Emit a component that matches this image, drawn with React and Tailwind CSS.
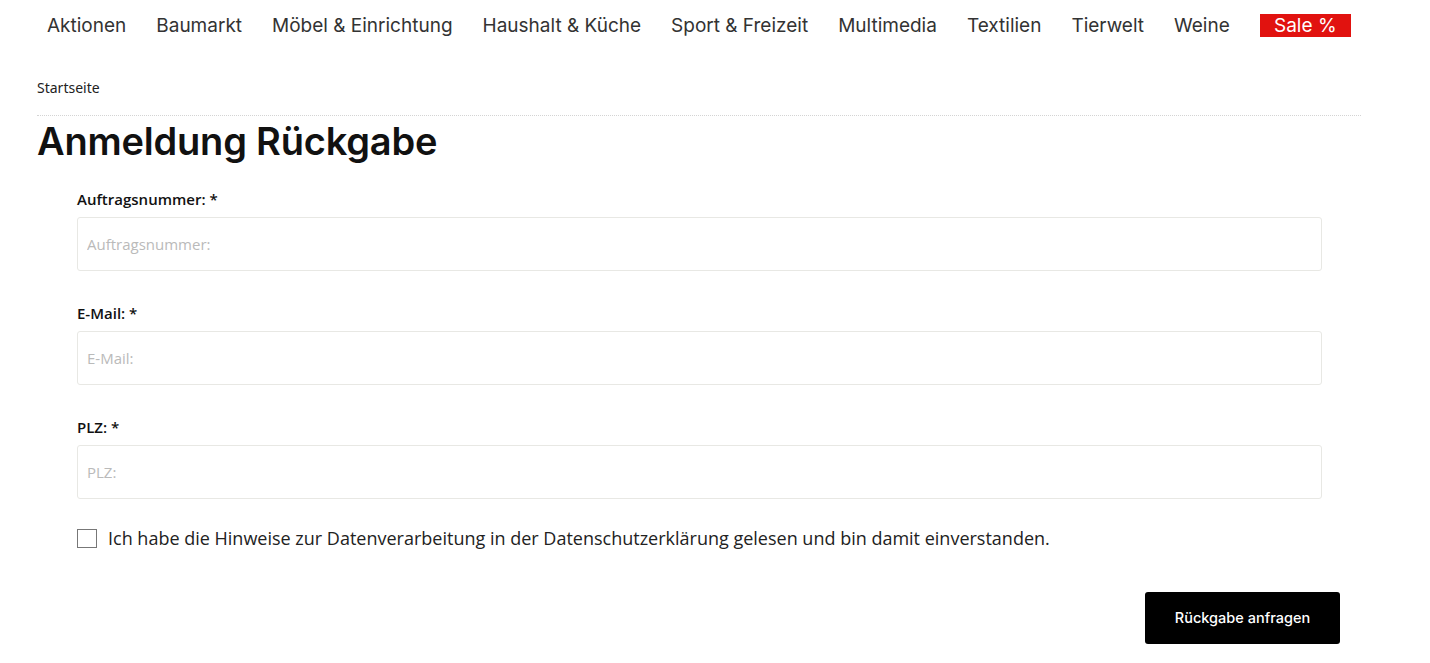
import React from 'react';

const navItems = [
  'Aktionen',
  'Baumarkt',
  'Möbel & Einrichtung',
  'Haushalt & Küche',
  'Sport & Freizeit',
  'Multimedia',
  'Textilien',
  'Tierwelt',
  'Weine',
];

const fields = [
  { label: 'Auftragsnummer:', placeholder: 'Auftragsnummer:' },
  { label: 'E-Mail:', placeholder: 'E-Mail:' },
  { label: 'PLZ:', placeholder: 'PLZ:' },
];

export default function App() {
  return (
    <div className="min-h-[663px] bg-white text-[#222]">
      {/* Hauptnavigation */}
      <nav className="flex items-center h-[51px] pt-[2px] pl-[47px] gap-[30px] font-['Inter',sans-serif] text-[19px] text-[#333]">
        {navItems.map(n => (
          <span key={n} className="whitespace-nowrap">{n}</span>
        ))}
        <span className="mb-[3px] bg-[#e1120f] text-white w-[91px] h-[23px] flex items-center justify-center leading-none">Sale %</span>
      </nav>

      <div className="px-[37px] w-[1398px]">
        <div className="pt-[30px] pb-[20px] text-[14px] font-['Noto_Sans',sans-serif] text-[#222] leading-none">Startseite</div>
        <div className="border-t border-dotted border-[#d4d4d4]" />
        <h1 className="font-['Inter',sans-serif] font-semibold text-[38px] leading-[50px] text-[#111] tracking-[-0.2px]">Anmeldung Rückgabe</h1>
      </div>

      {/* Formular */}
      <form className="ml-[77px] w-[1245px] mt-[23px] font-['Open_Sans',sans-serif]">
        {fields.map((f, i) => (
          <div key={f.label} className={i < fields.length - 1 ? 'mb-[32px]' : ''}>
            <label className="block text-[15px] font-semibold text-[#111] leading-[20px] mb-[8px]">{f.label} *</label>
            <input
              className="w-full h-[54px] border border-[#e8e8e4] rounded-[3px] px-[9px] text-[15px] placeholder:text-[#bababa] outline-none"
              placeholder={f.placeholder}
            />
          </div>
        ))}
        <label className="flex items-center h-[19px] gap-[11px] mt-[30px] text-[18px] text-[#222] whitespace-nowrap">
          <span className="w-[20px] h-[19px] border border-[#777] bg-white shrink-0" />
          Ich habe die Hinweise zur Datenverarbeitung in der Datenschutzerklärung gelesen und bin damit einverstanden.
        </label>
        <div className="flex justify-end mt-[44px]">
          <button type="button" className="mr-[-18px] w-[195px] h-[52px] bg-black text-white rounded-[3px] font-['Inter',sans-serif] font-medium text-[14.5px]">Rückgabe anfragen</button>
        </div>
      </form>
    </div>
  );
}
